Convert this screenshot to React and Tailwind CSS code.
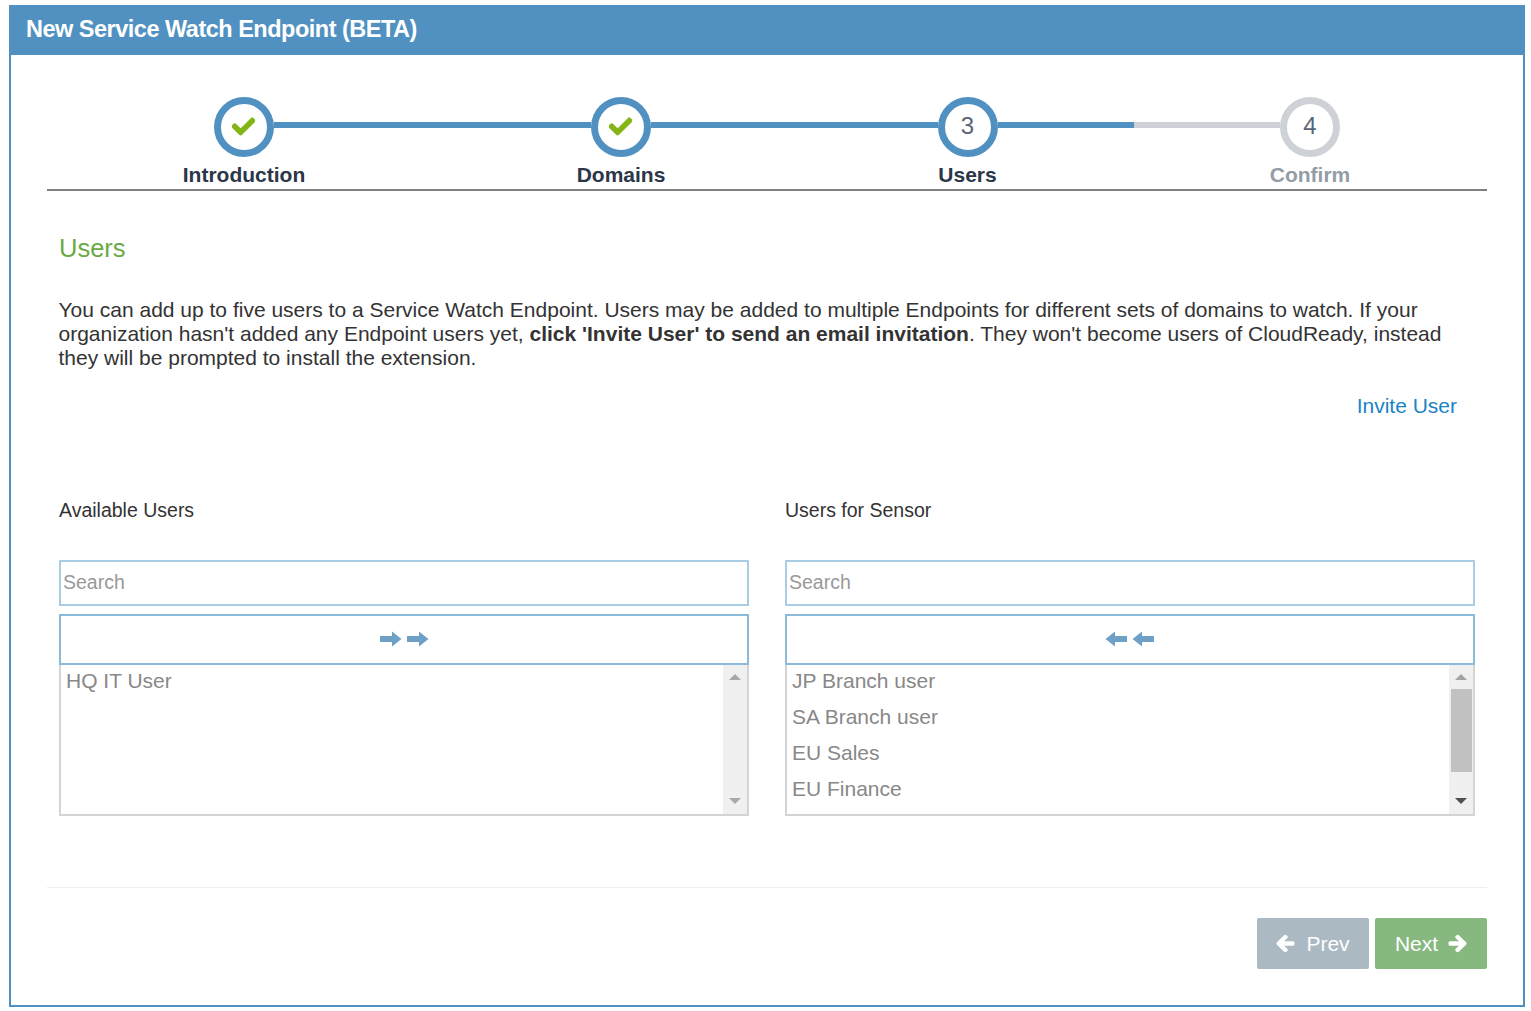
import { FaArrowLeft, FaArrowRight, FaCheck } from 'react-icons/fa';

const steps = [
    { label: 'Introduction', width: 'w-[394px]', done: true, left: 'bg-transparent', right: 'bg-[#5191c1]' },
    { label: 'Domains', width: 'w-[360px]', done: true, left: 'bg-[#5191c1]', right: 'bg-[#5191c1]' },
    { label: 'Users', number: 3, width: 'w-[333px]', left: 'bg-[#5191c1]', right: 'bg-[#5191c1]' },
    { label: 'Confirm', number: 4, width: 'w-[352px]', muted: true, left: 'bg-[#ced1d6]', right: 'bg-transparent' },
];

const Arrow = ({ flip }) => (
    <svg width="22" height="16" viewBox="0 0 22 16" className={flip ? '-scale-x-100' : ''}>
        <path d="M0 5h12V0.5L21.5 8 12 15.5V11H0z" fill="#6ea1c5" />
    </svg>
);

const Step = ({ step }) => (
    <div className={`${step.width} flex flex-col`}>
        <div className="flex items-center h-[60px]">
            <div className={`flex-1 h-[6px] -mt-[4px] ${step.left}`} />
            <div className={`w-[60px] h-[60px] rounded-full border-[7px] bg-white flex items-center justify-center pb-[2px] text-[24px] text-[#5b6577] ${step.muted ? 'border-[#ced1d6]' : 'border-[#5191c1]'}`}>
                {step.done ? <FaCheck className="w-[23px] h-[23px] -ml-[2px] text-[#84b516]" stroke="currentColor" strokeWidth="24" /> : step.number}
            </div>
            <div className={`flex-1 h-[6px] -mt-[4px] ${step.right}`} />
        </div>
        <div className={`mt-[6px] h-[26px] leading-[24px] text-center text-[21px] font-bold ${step.muted ? 'text-[#949ca6]' : 'text-[#2b3648]'}`}>
            {step.label}
        </div>
    </div>
);

const UserPicker = ({ title, users, flip, thumb }) => (
    <div className="w-[690px]">
        <div className="h-[24px] leading-[24px] text-[19.5px] text-[#333]">{title}</div>
        <input
            type="text"
            placeholder="Search"
            className="mt-[38px] block w-full h-[46px] px-[2px] pb-[1px] border-2 border-[#a9cde4] outline-none text-[19.5px] placeholder:text-[#999]"
        />
        <div className={`mt-[8px] h-[51px] border-2 border-[#8bbbd8] flex items-center justify-center gap-[5px] pb-[2px] ${flip ? 'pr-[2px]' : ''}`}>
            <Arrow flip={flip} />
            <Arrow flip={flip} />
        </div>
        <div className="flex h-[151px] border-2 border-t-0 border-[#d4d4d4]">
            <div className="flex-1 pl-[5px]">
                {users.map((user) => (
                    <div key={user} className="h-[36px] leading-[32px] text-[21px] text-[#888]">{user}</div>
                ))}
            </div>
            <div className="w-[24px] bg-[#f0f0f0] flex flex-col items-center">
                <div className={`mt-[9px] w-0 h-0 border-x-[6px] border-x-transparent border-b-[6px] ${thumb ? 'border-b-[#a3a3a3]' : 'border-b-[#a8a8a8]'}`} />
                {thumb && <div className="mt-[9px] w-[21px] h-[83px] bg-[#c1c1c1]" />}
                <div className={`mt-auto mb-[10px] w-0 h-0 border-x-[6px] border-x-transparent border-t-[6px] ${thumb ? 'border-t-[#505050]' : 'border-t-[#a8a8a8]'}`} />
            </div>
        </div>
    </div>
);

export default function App() {
    return (
        <div className="min-h-[1011px] bg-white pt-[5px] pl-[9px] pr-[6px] font-['Liberation_Sans',Arial,sans-serif]">
            <div className="h-[1002px] border-2 border-t-0 border-[#5191c1] flex flex-col">
                {/* Header */}
                <div className="-mx-[2px] h-[50px] bg-[#5191c1] pl-[17px] leading-[48px] text-[23.5px] font-bold text-white tracking-[-0.5px]">
                    New Service Watch Endpoint (BETA)
                </div>

                <div className="flex-1 px-[36px] flex flex-col">
                    {/* Wizard steps */}
                    <div className="mt-[42px] flex border-b-2 border-[#808080] h-[94px]">
                        {steps.map((step) => (
                            <Step key={step.label} step={step} />
                        ))}
                    </div>

                    {/* Content */}
                    <div className="px-[12px]">
                        <h3 className="mt-[41px] h-[32px] leading-[32px] text-[25.5px] text-[#69aa46]">Users</h3>
                        <p className="mt-[34px] leading-[24px] text-[21px] text-[#333] pr-[20px] -ml-[0.5px]">
                            You can add up to five users to a Service Watch Endpoint. Users may be added to multiple Endpoints for different sets of domains to watch. If your organization hasn't added any Endpoint users yet, <b>click 'Invite User' to send an email invitation</b>. They won't become users of CloudReady, instead they will be prompted to install the extension.
                        </p>
                        <div className="mt-[24px] pr-[18px] h-[24px] leading-[24px] text-right text-[21px] text-[#1a83c6]">Invite User</div>
                        <div className="mt-[80px] flex gap-[36px]">
                            <UserPicker title="Available Users" users={['HQ IT User']} />
                            <UserPicker title="Users for Sensor" users={['JP Branch user', 'SA Branch user', 'EU Sales', 'EU Finance']} flip thumb />
                        </div>
                    </div>

                    {/* Footer */}
                    <div className="mt-[71px] border-t border-[#eeeeee] pt-[30px] flex justify-end gap-[6px]">
                        <button className="w-[112px] h-[51px] rounded-[2px] bg-[#abb9c3] text-white text-[21px] flex items-center justify-center gap-[11px]">
                            <FaArrowLeft className="w-[19px] h-[19px]" stroke="currentColor" strokeWidth="40" />
                            Prev
                        </button>
                        <button className="w-[112px] h-[51px] rounded-[2px] bg-[#87b87f] text-white text-[21px] flex items-center justify-center gap-[10px]">
                            Next
                            <FaArrowRight className="w-[19px] h-[19px]" stroke="currentColor" strokeWidth="40" />
                        </button>
                    </div>
                </div>
            </div>
        </div>
    );
}
